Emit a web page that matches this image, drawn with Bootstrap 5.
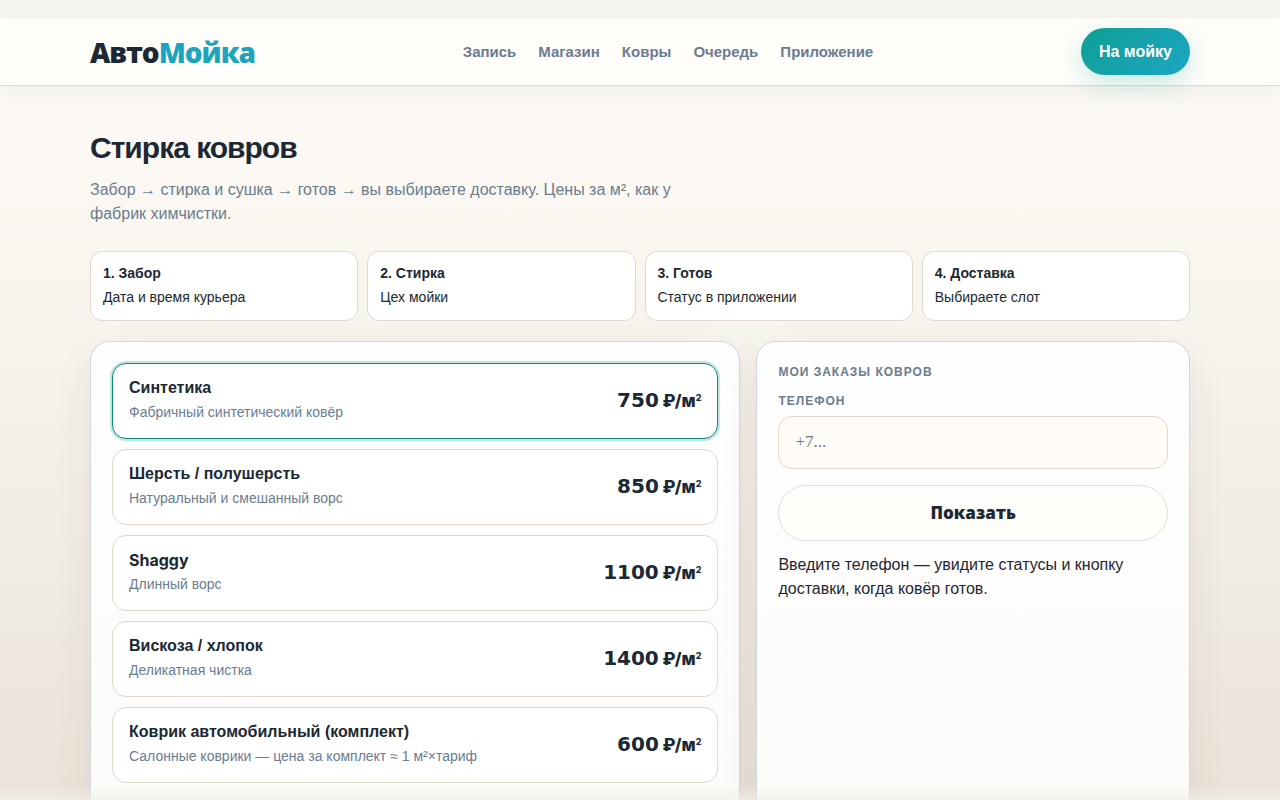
<!DOCTYPE html>
<html lang="ru">
<head>
<meta charset="utf-8">
<meta name="viewport" content="width=device-width, initial-scale=1">
<title>АвтоМойка — Стирка ковров</title>
<link href="https://cdn.jsdelivr.net/npm/bootstrap@5.3.0/dist/css/bootstrap.min.css" rel="stylesheet">
<style>
:root { --ink: #1c2833; --muted: #6b7c8f; --line: #e0d8cd; --teal: #0f8579; }
body {
  font-family: "Liberation Sans", sans-serif; color: var(--ink); line-height: 24px;
  background: linear-gradient(180deg, #fffdf8 0, #fdfaf5 120px, #f9f6f0 260px, #f4efe9 430px, #efeae2 600px, #ebe2d8 800px) #ebe2d8;
}
main { padding-top: 44px; padding-bottom: 40px; }
.page-wrap { max-width: 1124px; }
.top-strip { height: 18px; background: #f5f5f1; }
.bottom-fade { height: 16px; background: linear-gradient(180deg, rgba(240, 240, 232, 0), rgba(240, 240, 232, .7)); pointer-events: none; }
.site-header {
  background: #fffdfa; border-bottom: 1px solid #e0d8cd;
  box-shadow: 0 8px 24px rgba(28, 40, 51, .06);
}
.site-header .page-wrap { min-height: 67px; }
.brand { font: 800 28px/36px "Open Sans", sans-serif; letter-spacing: -1px; color: var(--ink); }
.brand span { color: #1da5c0; }
.site-nav { gap: 22px; }
.site-nav a { font-size: 15px; font-weight: 700; color: var(--muted); }
.btn-cta {
  color: #fff; font-size: 16px; font-weight: 700; line-height: 23px; padding: 12px 18px; border: 0;
  background: linear-gradient(135deg, #0fa094, #1ca5c4); box-shadow: 0 8px 24px rgba(15, 160, 148, .22);
}
.btn-cta:hover { color: #fff; }
h1 { font-size: 30px; line-height: 36px; letter-spacing: -1px; }
.lead-text { color: var(--muted); max-width: 600px; margin: 12px 0 25px; }
.step-grid { display: grid; grid-template-columns: repeat(4, 1fr); gap: 9px; margin-bottom: 20px; }
.step-box { background: #fffffd; border: 1px solid var(--line); border-radius: 12px; padding: 9px 12px 11px; font-size: 14px; }
.panel-grid { display: grid; grid-template-columns: 3fr 2fr; gap: 16px; min-height: 500px; }
.panel-box {
  border: 1px solid #cbd8e0; border-radius: 20px; padding: 21px;
  background: linear-gradient(180deg, #fefefe, #fdfbf9); box-shadow: 0 14px 40px rgba(80, 60, 40, .07);
}
.tariff-list { gap: 10px; }
.tariff { background: #fff; border: 1px solid var(--line); border-radius: 14px; padding: 12px 16px 14px; color: var(--ink); line-height: 24px; }
.tariff.active { border-color: var(--teal); box-shadow: 0 0 0 2px #c0e8e3; }
.tariff small { font-size: 14px; color: var(--muted); }
.tariff .latin { font-family: Inter, sans-serif; }
.price { font: 800 17px/24px Inter, sans-serif; }
.price b { font: 700 20px/24px "DejaVu Sans", sans-serif; }
.price sup { font-size: 9px; top: -6px; }
.caption-label { font-size: 12px; line-height: 17px; font-weight: 700; letter-spacing: 1px; color: var(--muted); text-transform: uppercase; }
h2.caption-label { margin: 1px 0 12px; }
label.caption-label { margin-bottom: 6px; }
.phone-input {
  background: #fffcf8; border: 1px solid var(--line); border-radius: 14px; padding: 12px 16px 14px;
  font: 17px/25px "Liberation Serif", serif;
}
.phone-input::placeholder { color: #757575; }
.btn-show { font: 800 17px/24px "Open Sans", sans-serif; margin: 16px 0 12px; padding: 15px; background: #fffefb; border: 1px solid #dedfe0; color: var(--ink); }
@media (max-width: 767px) {
  .step-grid { grid-template-columns: repeat(2, 1fr); }
  .panel-grid { grid-template-columns: 1fr; }
}
</style>
</head>
<body>
<div class="top-strip"></div>
<header class="site-header">
  <div class="container-fluid page-wrap d-flex flex-wrap align-items-center justify-content-between">
    <a class="brand text-decoration-none" href="#">Авто<span>Мойка</span></a>
    <nav class="site-nav d-flex flex-wrap">
      <a class="text-decoration-none" href="#">Запись</a>
      <a class="text-decoration-none" href="#">Магазин</a>
      <a class="text-decoration-none" href="#">Ковры</a>
      <a class="text-decoration-none" href="#">Очередь</a>
      <a class="text-decoration-none" href="#">Приложение</a>
    </nav>
    <button class="btn btn-cta rounded-pill" type="button">На мойку</button>
  </div>
</header>

<main class="container-fluid page-wrap">
  <h1 class="fw-bold mb-0">Стирка ковров</h1>
  <p class="lead-text">Забор → стирка и сушка → готов → вы выбираете доставку. Цены за м², как у фабрик химчистки.</p>

  <section class="step-grid">
    <div class="step-box"><strong class="d-block">1. Забор</strong>Дата и время курьера</div>
    <div class="step-box"><strong class="d-block">2. Стирка</strong>Цех мойки</div>
    <div class="step-box"><strong class="d-block">3. Готов</strong>Статус в приложении</div>
    <div class="step-box"><strong class="d-block">4. Доставка</strong>Выбираете слот</div>
  </section>

  <div class="panel-grid">
    <section class="panel-box tariff-list d-flex flex-column">
      <button type="button" class="tariff active d-flex align-items-center justify-content-between text-start">
        <span><strong class="d-block">Синтетика</strong><small class="d-block">Фабричный синтетический ковёр</small></span>
        <span class="price text-nowrap"><b>750</b> ₽/м<sup>2</sup></span>
      </button>
      <button type="button" class="tariff d-flex align-items-center justify-content-between text-start">
        <span><strong class="d-block">Шерсть / полушерсть</strong><small class="d-block">Натуральный и смешанный ворс</small></span>
        <span class="price text-nowrap"><b>850</b> ₽/м<sup>2</sup></span>
      </button>
      <button type="button" class="tariff d-flex align-items-center justify-content-between text-start">
        <span><strong class="d-block latin">Shaggy</strong><small class="d-block">Длинный ворс</small></span>
        <span class="price text-nowrap"><b>1100</b> ₽/м<sup>2</sup></span>
      </button>
      <button type="button" class="tariff d-flex align-items-center justify-content-between text-start">
        <span><strong class="d-block">Вискоза / хлопок</strong><small class="d-block">Деликатная чистка</small></span>
        <span class="price text-nowrap"><b>1400</b> ₽/м<sup>2</sup></span>
      </button>
      <button type="button" class="tariff d-flex align-items-center justify-content-between text-start">
        <span><strong class="d-block">Коврик автомобильный (комплект)</strong><small class="d-block">Салонные коврики — цена за комплект ≈ 1 м²×тариф</small></span>
        <span class="price text-nowrap"><b>600</b> ₽/м<sup>2</sup></span>
      </button>
    </section>

    <section class="panel-box">
      <h2 class="caption-label">Мои заказы ковров</h2>
      <label class="caption-label d-block" for="phone">Телефон</label>
      <input class="phone-input d-block w-100" id="phone" type="tel" placeholder="+7...">
      <button class="btn btn-show rounded-pill w-100" type="button">Показать</button>
      <p class="mb-0">Введите телефон — увидите статусы и кнопку доставки, когда ковёр готов.</p>
    </section>
  </div>
</main>
<div class="bottom-fade fixed-bottom"></div>
<script src="https://cdn.jsdelivr.net/npm/bootstrap@5.3.0/dist/js/bootstrap.bundle.min.js"></script>
</body>
</html>
